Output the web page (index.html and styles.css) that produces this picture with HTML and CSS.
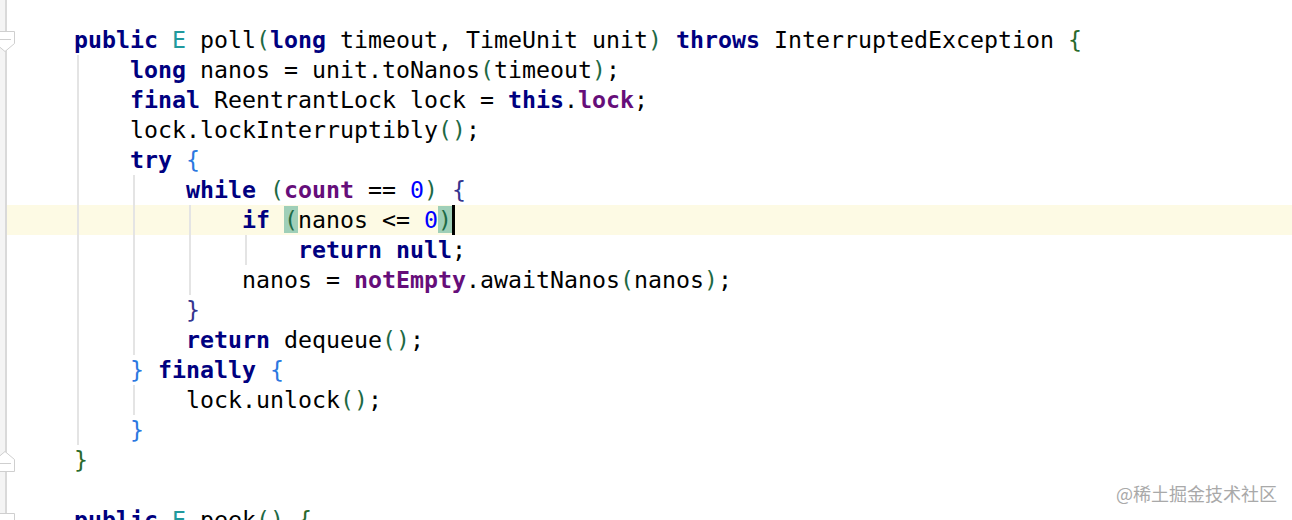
FILE: index.html
```html
<!DOCTYPE html>
<html>
<head>
<meta charset="utf-8">
<link rel="stylesheet" href="styles.css">
</head>
<body>
<div class="editor">
  <div class="gutter">
    <svg class="fold fold-open" width="24" height="24" viewBox="0 0 24 24"><path d="M0.5 0.5 H19.5 V12.5 L10 20.5 L0.5 12.5 Z" fill="#fff" stroke="#cfcfcf"/><path d="M4 8.5 H16" stroke="#cfcfcf"/></svg>
    <svg class="fold fold-close" width="24" height="24" viewBox="0 0 24 24"><path d="M0.5 23.5 H19.5 V11.5 L10 3.5 L0.5 11.5 Z" fill="#fff" stroke="#cfcfcf"/><path d="M4 15.5 H16" stroke="#cfcfcf"/></svg>
    <svg class="fold fold-next" width="24" height="24" viewBox="0 0 24 24"><path d="M0.5 0.5 H19.5 V12.5 L10 20.5 L0.5 12.5 Z" fill="#fff" stroke="#cfcfcf"/></svg>
  </div>
  <div class="code">
    <span class="guide g1"></span>
    <span class="guide g2a"></span>
    <span class="guide g2b"></span>
    <span class="guide g3"></span>
    <span class="guide g4"></span>
    <div class="line"><span class="kw">public</span> <span class="tp">E</span> poll<span class="p1">(</span><span class="kw">long</span> timeout, TimeUnit unit<span class="p1">)</span> <span class="kw">throws</span> InterruptedException <span class="b1">{</span></div>
    <div class="line">    <span class="kw">long</span> nanos = unit.toNanos<span class="p1">(</span>timeout<span class="p1">)</span>;</div>
    <div class="line">    <span class="kw">final</span> ReentrantLock lock = <span class="kw">this</span>.<span class="fld">lock</span>;</div>
    <div class="line">    lock.lockInterruptibly<span class="p1">()</span>;</div>
    <div class="line">    <span class="kw">try</span> <span class="b2">{</span></div>
    <div class="line">        <span class="kw">while</span> <span class="p1">(</span><span class="fld">count</span> == <span class="num">0</span><span class="p1">)</span> <span class="b3">{</span></div>
    <div class="line current">            <span class="kw">if</span> <span class="p1 match">(</span>nanos &lt;= <span class="num">0</span><span class="p1 match">)</span><span class="caret"></span></div>
    <div class="line">                <span class="kw">return</span> <span class="kw">null</span>;</div>
    <div class="line">            nanos = <span class="fld">notEmpty</span>.awaitNanos<span class="p1">(</span>nanos<span class="p1">)</span>;</div>
    <div class="line">        <span class="b3">}</span></div>
    <div class="line">        <span class="kw">return</span> dequeue<span class="p1">()</span>;</div>
    <div class="line">    <span class="b2">}</span> <span class="kw">finally</span> <span class="b2">{</span></div>
    <div class="line">        lock.unlock<span class="p1">()</span>;</div>
    <div class="line">    <span class="b2">}</span></div>
    <div class="line"><span class="b1">}</span></div>
    <div class="line"> </div>
    <div class="line"><span class="kw">public</span> <span class="tp">E</span> peek<span class="p1">()</span> <span class="b1">{</span></div>
  </div>
  <div class="watermark">@稀土掘金技术社区</div>
</div>
</body>
</html>
```

FILE: styles.css
```css
html, body {
  margin: 0;
  padding: 0;
  background: #ffffff;
  overflow: hidden;
}

.editor {
  position: relative;
  display: flex;
  width: 1292px;
  height: 520px;
  overflow: hidden;
  background: #ffffff;
}

.gutter {
  position: relative;
  flex: 0 0 5px;
  background: #f4f4f4;
  border-right: 2px solid #d9d9d9;
  z-index: 2;
}

.fold {
  position: absolute;
  left: -5px;
  overflow: visible;
}

.fold-open { top: 31px; }
.fold-close { top: 448px; }
.fold-next { top: 513px; }

.code {
  position: relative;
  flex: 1;
  padding: 25px 0 0 67px;
  font-family: "DejaVu Sans Mono", "Liberation Mono", monospace;
  font-size: 23.25px;
  color: #000000;
}

.line {
  height: 30px;
  line-height: 30px;
  white-space: pre;
  position: relative;
}

.line.current {
  background: #fdfae4;
  margin-left: -67px;
  padding-left: 67px;
}

.kw { color: #000080; font-weight: bold; }
.tp { color: #20999d; }
.fld { color: #660e7a; font-weight: bold; }
.num { color: #0000ff; }
.p1 { color: #1d6a45; }
.b1 { color: #2a6a2c; }
.b2 { color: #2b78e0; }
.b3 { color: #35358f; }

.match {
  background: #9fcfb8;
}

.caret {
  display: inline-block;
  width: 3px;
  height: 30px;
  vertical-align: top;
  background: #000000;
}

.guide {
  position: absolute;
  width: 2px;
  background: #e4e4e4;
  z-index: 1;
}

.g1 { left: 70px; top: 55px; height: 390px; }
.g2a { left: 126px; top: 175px; height: 180px; }
.g2b { left: 126px; top: 385px; height: 30px; }
.g3 { left: 182px; top: 205px; height: 90px; }
.g4 { left: 238px; top: 235px; height: 30px; }

.watermark {
  position: absolute;
  right: 15px;
  top: 481px;
  font-family: "Noto Sans CJK SC", "Noto Sans", sans-serif;
  font-size: 18px;
  line-height: 24px;
  color: #a9a9a9;
}
```
